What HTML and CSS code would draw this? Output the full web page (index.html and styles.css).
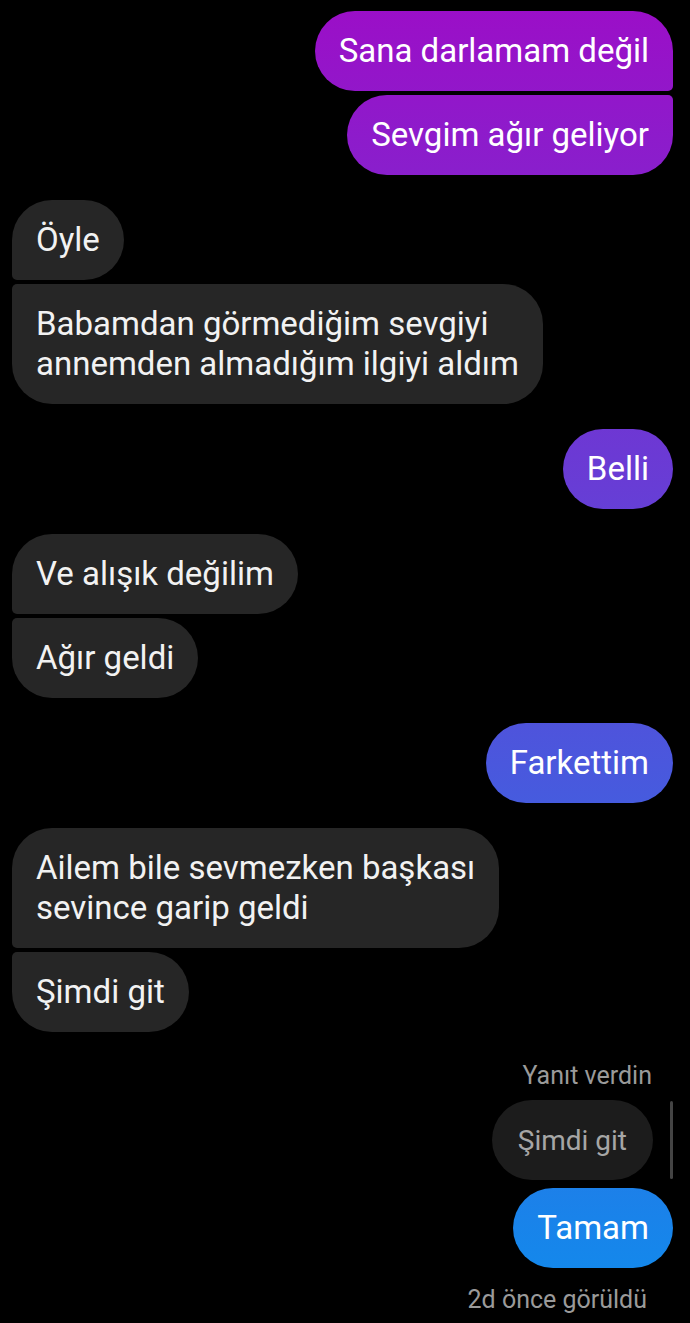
FILE: index.html
```html
<!DOCTYPE html>
<html lang="tr">
<head>
<meta charset="utf-8">
<title>Sohbet</title>
<link rel="stylesheet" href="styles.css">
</head>
<body>
<main class="chat">
  <div class="group out">
    <div class="msg first">Sana darlamam değil</div>
    <div class="msg last">Sevgim ağır geliyor</div>
  </div>
  <div class="group in">
    <div class="msg first">Öyle</div>
    <div class="msg last">Babamdan görmediğim sevgiyi<br>annemden almadığım ilgiyi aldım</div>
  </div>
  <div class="group out">
    <div class="msg">Belli</div>
  </div>
  <div class="group in">
    <div class="msg first">Ve alışık değilim</div>
    <div class="msg last">Ağır geldi</div>
  </div>
  <div class="group out">
    <div class="msg">Farkettim</div>
  </div>
  <div class="group in">
    <div class="msg first">Ailem bile sevmezken başkası<br>sevince garip geldi</div>
    <div class="msg last">Şimdi git</div>
  </div>
  <div class="reply">
    <div class="reply-label">Yanıt verdin</div>
    <div class="reply-row">
      <div class="reply-bubble">Şimdi git</div>
      <div class="reply-bar"></div>
    </div>
  </div>
  <div class="group out after-reply">
    <div class="msg">Tamam</div>
  </div>
  <div class="seen">2d önce görüldü</div>
</main>
</body>
</html>
```
FILE: styles.css
```css
html, body {
  margin: 0;
  padding: 0;
  background: #000;
}

body {
  font-family: Roboto, "Noto Sans", "Liberation Sans", sans-serif;
  -webkit-font-smoothing: antialiased;
}

.chat {
  display: flex;
  flex-direction: column;
  padding: 11px 17px 0 12px;
  height: 1323px;
  box-sizing: border-box;
  overflow: hidden;
}

.group {
  display: flex;
  flex-direction: column;
  gap: 4px;
  margin-top: 25px;
}

.group:first-child {
  margin-top: 0;
}

.out {
  align-items: flex-end;
}

.in {
  align-items: flex-start;
}

.msg {
  box-sizing: border-box;
  padding: 20px 24px;
  font-size: 33px;
  line-height: 40px;
  border-radius: 40px;
  white-space: nowrap;
}

.msg.wide {
  padding-right: 33px;
}

.out .msg {
  color: #ffffff;
  background: linear-gradient(180deg, rgb(156, 14, 199) 0%, rgb(14, 141, 237) 100%);
  background-attachment: fixed;
}

.in .msg {
  color: #f2f2f2;
  background: #262626;
}

.out .msg.first {
  border-bottom-right-radius: 5px;
}

.out .msg.last {
  border-top-right-radius: 5px;
}

.in .msg.first {
  border-bottom-left-radius: 5px;
}

.in .msg.last {
  border-top-left-radius: 5px;
}

.reply {
  display: flex;
  flex-direction: column;
  align-items: flex-end;
  margin-top: 30px;
}

.reply-label {
  font-size: 25px;
  line-height: 28px;
  color: #9a9a9a;
  padding-right: 21px;
}

.reply-row {
  display: flex;
  align-items: center;
  gap: 17px;
  margin-top: 10px;
}

.reply-bubble {
  height: 80px;
  box-sizing: border-box;
  padding: 0 26px;
  display: flex;
  align-items: center;
  font-size: 28px;
  color: #a6a6a6;
  background: #1c1c1c;
  border-radius: 40px;
}

.reply-bar {
  width: 3px;
  height: 78px;
  border-radius: 2px;
  background: #444444;
}

.group.after-reply {
  margin-top: 8px;
}

.seen {
  margin-top: 18px;
  align-self: flex-end;
  padding-right: 26px;
  font-size: 25px;
  line-height: 28px;
  color: #9a9a9a;
}
```
